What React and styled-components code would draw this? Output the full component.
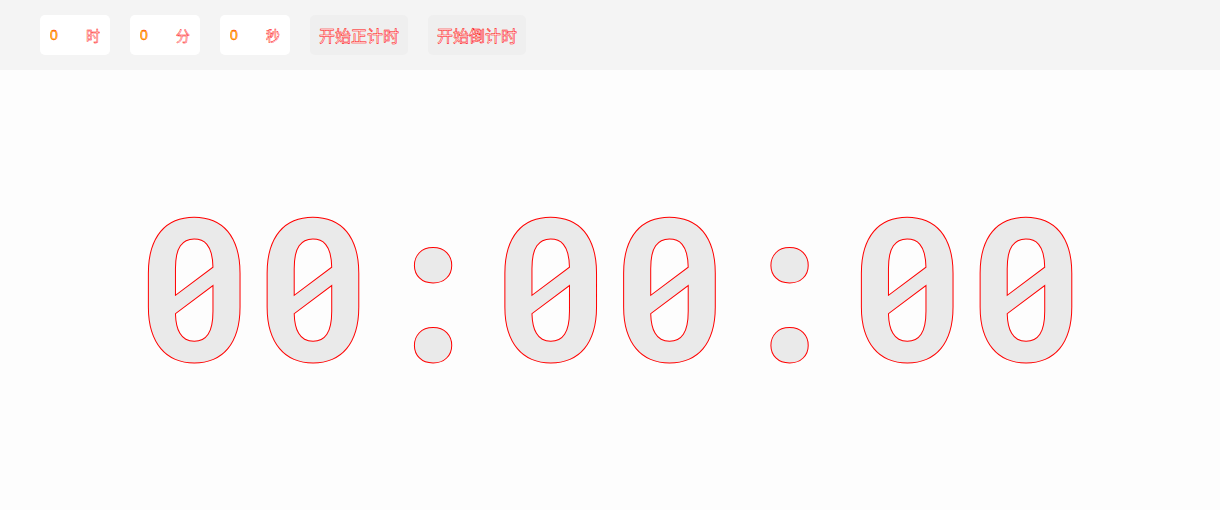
import React, { useState } from 'react'
import styled, { createGlobalStyle } from 'styled-components'

const GlobalStyle = createGlobalStyle`
  html, body {
    margin: 0;
    padding: 0;
    background: #fdfdfd;
    font-family: "Liberation Sans", "Noto Sans CJK SC", sans-serif;
  }
`

const Page = styled.div`
  width: 1220px;
  height: 510px;
  display: flex;
  flex-direction: column;
  background: #fdfdfd;
`

const Toolbar = styled.div`
  height: 70px;
  background: #f4f4f4;
  display: flex;
  align-items: center;
  gap: 20px;
  padding: 0 40px;
  box-sizing: border-box;
`

const Field = styled.label`
  width: 70px;
  height: 40px;
  background: #fff;
  border-radius: 5px;
  display: flex;
  align-items: center;
  padding: 0 10px;
  box-sizing: border-box;
  font-size: 14px;
`

const NumInput = styled.input`
  width: 36px;
  border: none;
  outline: none;
  background: transparent;
  padding: 0;
  font-family: "Liberation Sans", sans-serif;
  font-size: 14px;
  color: #ffee00;
  -webkit-text-stroke: 0.4px #ff0000;
`

const Unit = styled.span`
  color: #ffffff;
  -webkit-text-stroke: 0.4px #ff0000;
  font-family: "Noto Sans CJK SC", sans-serif;
`

const Button = styled.button`
  height: 40px;
  padding: 0 9px;
  border: none;
  border-radius: 5px;
  background: #efefef;
  font-family: "Noto Sans CJK SC", sans-serif;
  font-size: 16px;
  color: #ffffff;
  -webkit-text-stroke: 0.5px #ff0000;
  cursor: pointer;
`

const Stage = styled.div`
  flex: 1;
  display: flex;
  align-items: center;
  justify-content: center;
  padding-bottom: 10px;
`

const Clock = styled.div`
  font-family: "Roboto Mono", "DejaVu Sans Mono", monospace;
  font-weight: bold;
  font-size: 198px;
  line-height: 1;
  color: #eaeaea;
  -webkit-text-stroke: 1px #ff0000;
  white-space: pre;
`

const pad = n => String(n).padStart(2, '0')

const App = () => {
  const [h, setH] = useState('0')
  const [m, setM] = useState('0')
  const [s, setS] = useState('0')
  const [total] = useState(0)

  const hh = pad(Math.floor(total / 3600))
  const mm = pad(Math.floor((total % 3600) / 60))
  const ss = pad(total % 60)

  return (
    <Page>
      <GlobalStyle />
      <Toolbar>
        <Field>
          <NumInput value={h} onChange={e => setH(e.target.value)} />
          <Unit>时</Unit>
        </Field>
        <Field>
          <NumInput value={m} onChange={e => setM(e.target.value)} />
          <Unit>分</Unit>
        </Field>
        <Field>
          <NumInput value={s} onChange={e => setS(e.target.value)} />
          <Unit>秒</Unit>
        </Field>
        <Button>开始正计时</Button>
        <Button>开始倒计时</Button>
      </Toolbar>
      <Stage>
        <Clock>{`${hh}:${mm}:${ss}`}</Clock>
      </Stage>
    </Page>
  )
}

export default App
